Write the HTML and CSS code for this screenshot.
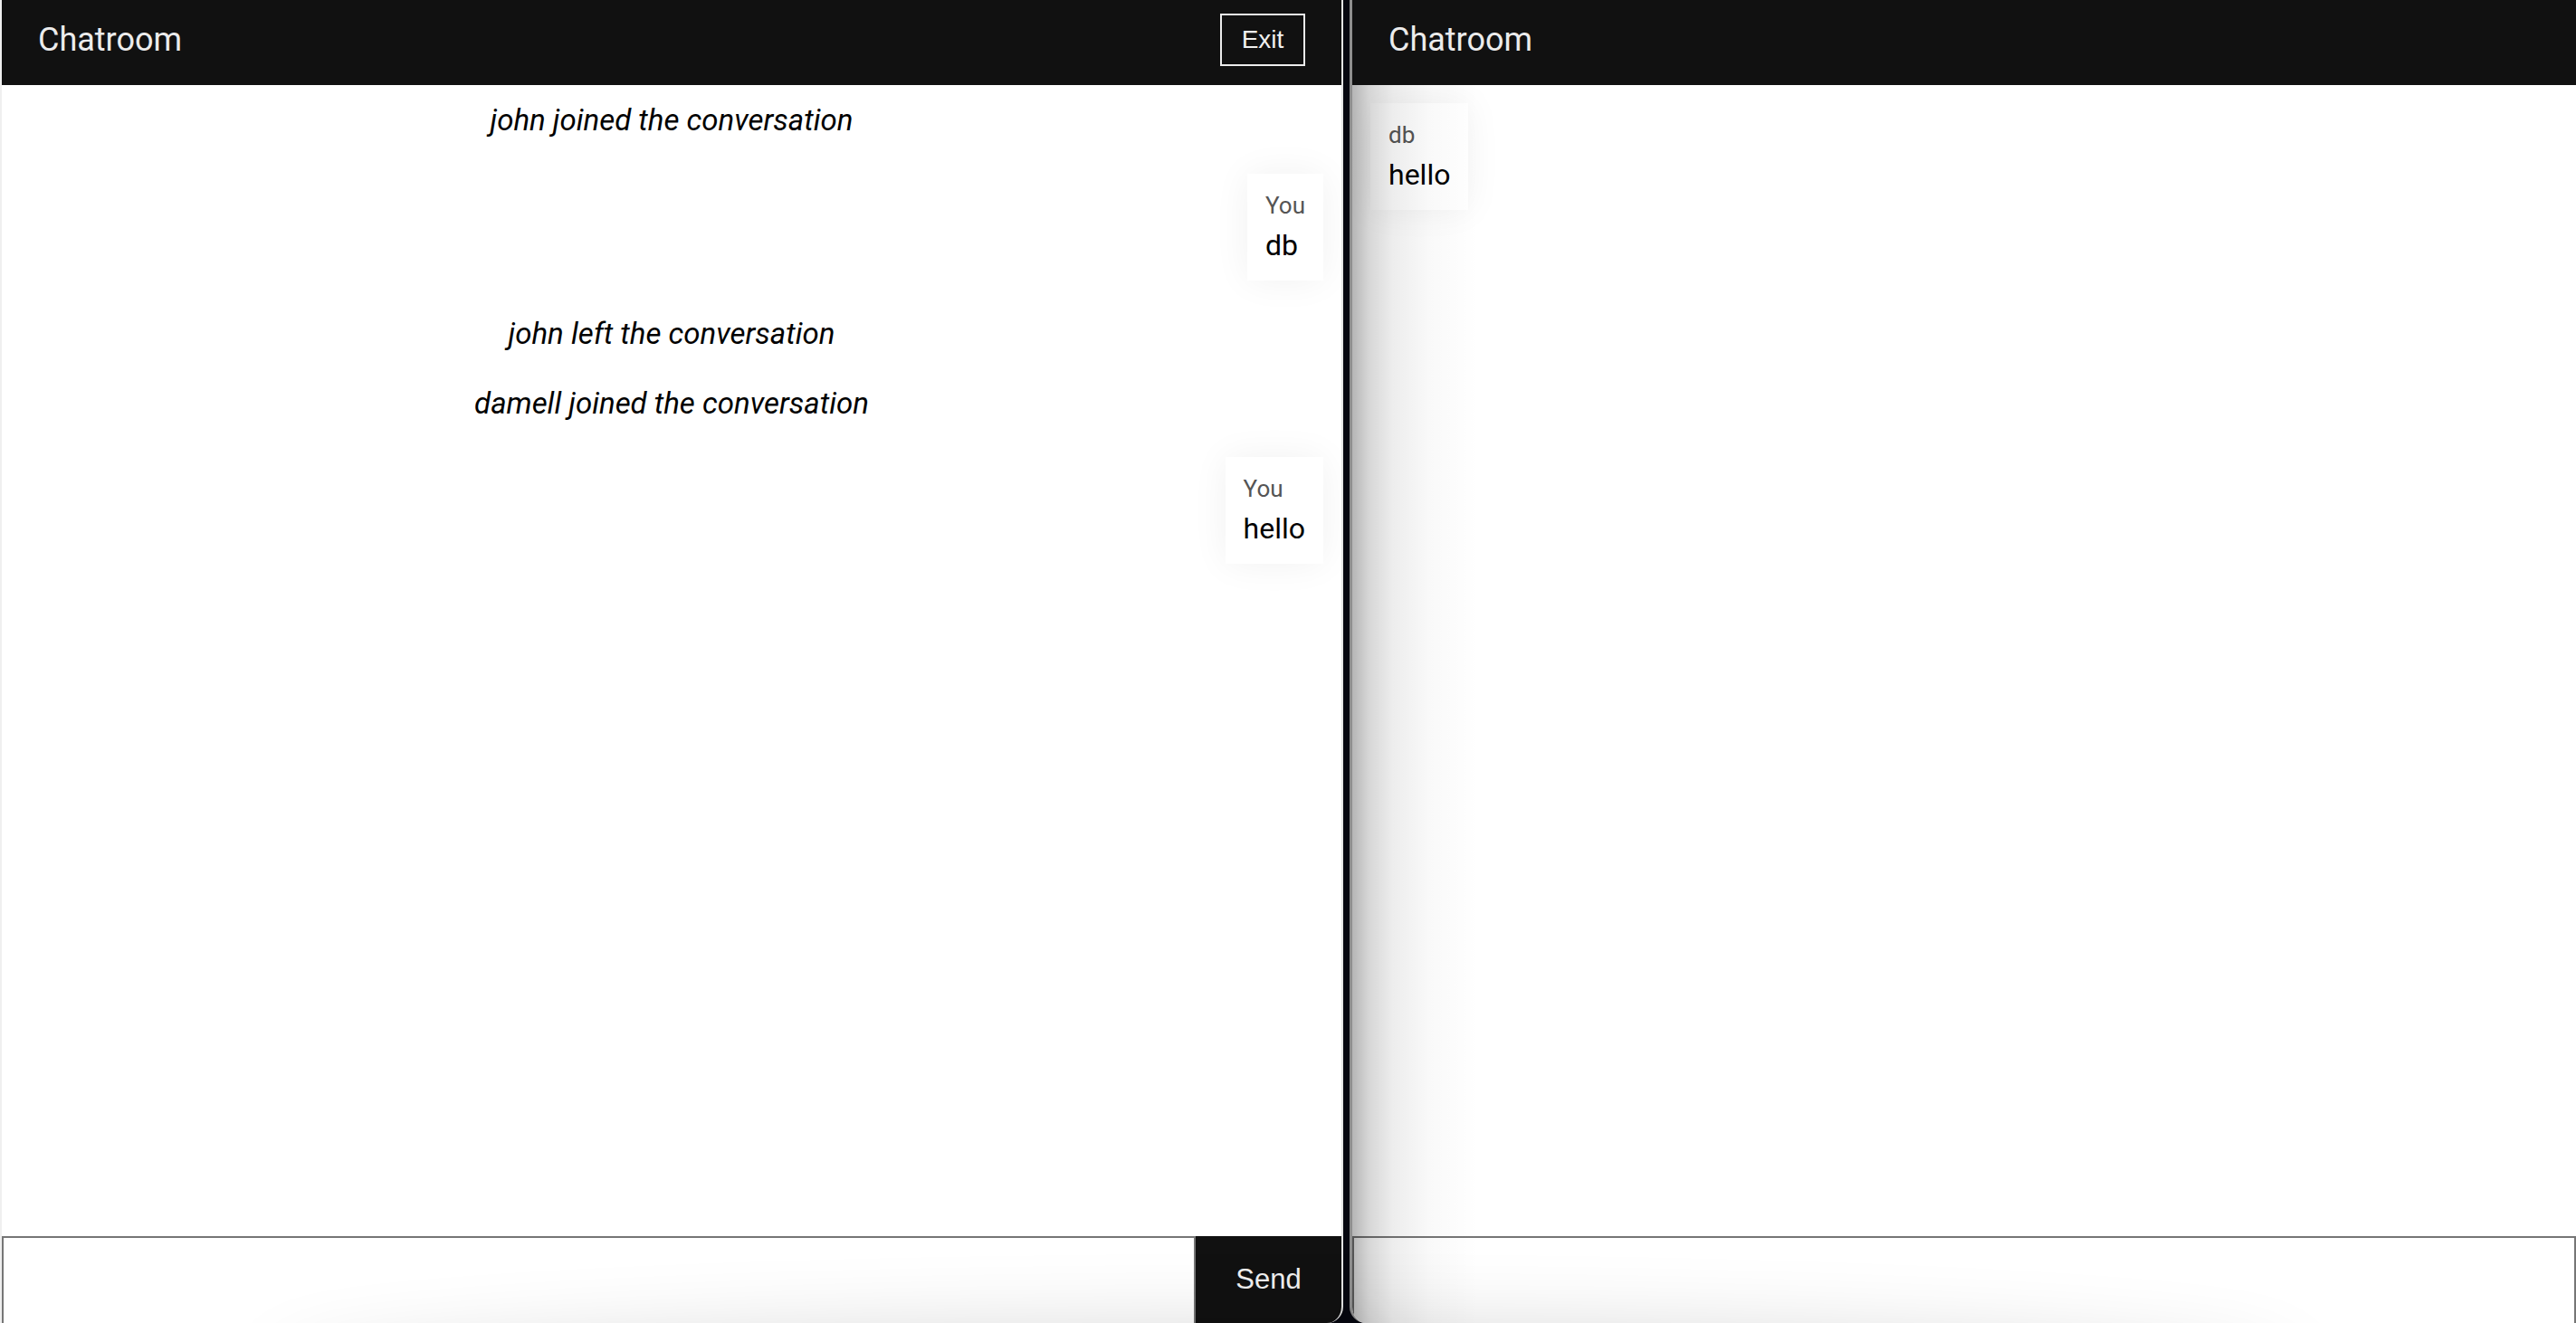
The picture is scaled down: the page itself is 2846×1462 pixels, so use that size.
FILE: index.html
```html
<!DOCTYPE html>
<html lang="en">
<head>
<meta charset="utf-8">
<title>Chatroom</title>
<link rel="stylesheet" href="styles.css">
</head>
<body>
<div class="desk">
  <section class="win win-left">
    <header class="bar">
      <h1 class="title">Chatroom</h1>
      <button class="exit" type="button">Exit</button>
    </header>
    <main class="log">
      <p class="event">john joined the conversation</p>
      <div class="msg mine">
        <div class="who">You</div>
        <div class="text">db</div>
      </div>
      <p class="event">john left the conversation</p>
      <p class="event">damell joined the conversation</p>
      <div class="msg mine">
        <div class="who">You</div>
        <div class="text">hello</div>
      </div>
    </main>
    <footer class="composer">
      <input class="field" type="text" aria-label="Message">
      <button class="send" type="button">Send</button>
    </footer>
  </section>

  <section class="win win-right">
    <header class="bar">
      <h1 class="title">Chatroom</h1>
    </header>
    <main class="log">
      <div class="msg theirs">
        <div class="who">db</div>
        <div class="text">hello</div>
      </div>
    </main>
    <footer class="composer">
      <input class="field" type="text" aria-label="Message">
    </footer>
    <div class="edge-shade"></div>
  </section>

  <div class="floor-shade"></div>
</div>
</body>
</html>
```

FILE: styles.css
```css
* {
  box-sizing: border-box;
}

html,
body {
  margin: 0;
  padding: 0;
  height: 100%;
}

body {
  background: #06070f;
  font-family: Roboto, "Noto Sans", "Liberation Sans", sans-serif;
  overflow: hidden;
}

.desk {
  position: relative;
  display: flex;
  gap: 7px;
  height: 1462px;
  overflow: hidden;
  background: #06070f;
}

.win {
  position: relative;
  display: flex;
  flex-direction: column;
  height: 1462px;
  background: #ffffff;
  overflow: hidden;
}

.win-left {
  width: 1484px;
  flex: none;
  border-left: 2px solid #efefef;
  border-right: 2px solid #e4e4e4;
  border-bottom-right-radius: 18px;
}

.win-right {
  flex: 1;
  border-left: 3px solid #8e8e8e;
  border-bottom-left-radius: 18px;
}

.bar {
  flex: none;
  height: 94px;
  display: flex;
  align-items: center;
  justify-content: space-between;
  padding: 0 40px 6px 40px;
  background: #111111;
}

.title {
  margin: 0;
  font-family: Roboto, "Noto Sans", sans-serif;
  font-weight: 400;
  font-size: 36px;
  color: #ececec;
}

.exit {
  width: 94px;
  height: 58px;
  padding: 0;
  margin: 0;
  border: 2px solid #ececec;
  background: transparent;
  color: #f0f0f0;
  font-family: "Liberation Sans", Arial, sans-serif;
  font-size: 28px;
}

.log {
  flex: 1;
  display: flex;
  flex-direction: column;
  gap: 40px;
  padding: 20px;
  overflow: hidden;
}

.event {
  margin: 0;
  text-align: center;
  font-style: italic;
  font-size: 33px;
  line-height: 37.5px;
  color: #000000;
}

.msg {
  padding: 20px;
  background: #ffffff;
  box-shadow: 0 0 40px rgba(0, 0, 0, 0.06);
}

.mine {
  align-self: flex-end;
}

.theirs {
  align-self: flex-start;
}

.who {
  font-size: 26px;
  color: #555555;
  margin-bottom: 10px;
}

.text {
  font-size: 32px;
  color: #000000;
}

.composer {
  flex: none;
  height: 96px;
  display: flex;
}

.field {
  flex: 1;
  min-width: 0;
  height: 100%;
  margin: 0;
  padding: 0 16px;
  border: 2px solid #767676;
  border-bottom: none;
  background: #ffffff;
  font-family: Roboto, sans-serif;
  font-size: 32px;
}

.send {
  width: 161px;
  flex: none;
  margin: 0;
  padding: 0;
  border: none;
  background: #111111;
  color: #f0f0f0;
  font-family: "Liberation Sans", Arial, sans-serif;
  font-size: 31px;
}

.edge-shade {
  position: absolute;
  top: 94px;
  left: 0;
  bottom: 0;
  width: 150px;
  pointer-events: none;
  background: linear-gradient(to right,
    rgba(0, 0, 0, 0.29) 0,
    rgba(0, 0, 0, 0.16) 18px,
    rgba(0, 0, 0, 0.07) 45px,
    rgba(0, 0, 0, 0.025) 85px,
    rgba(0, 0, 0, 0) 140px);
}

.floor-shade {
  position: absolute;
  left: 330px;
  width: 2180px;
  top: 1500px;
  height: 60px;
  border-radius: 50%;
  pointer-events: none;
  box-shadow: 0 0 90px 30px rgba(0, 0, 0, 0.16);
}
```
